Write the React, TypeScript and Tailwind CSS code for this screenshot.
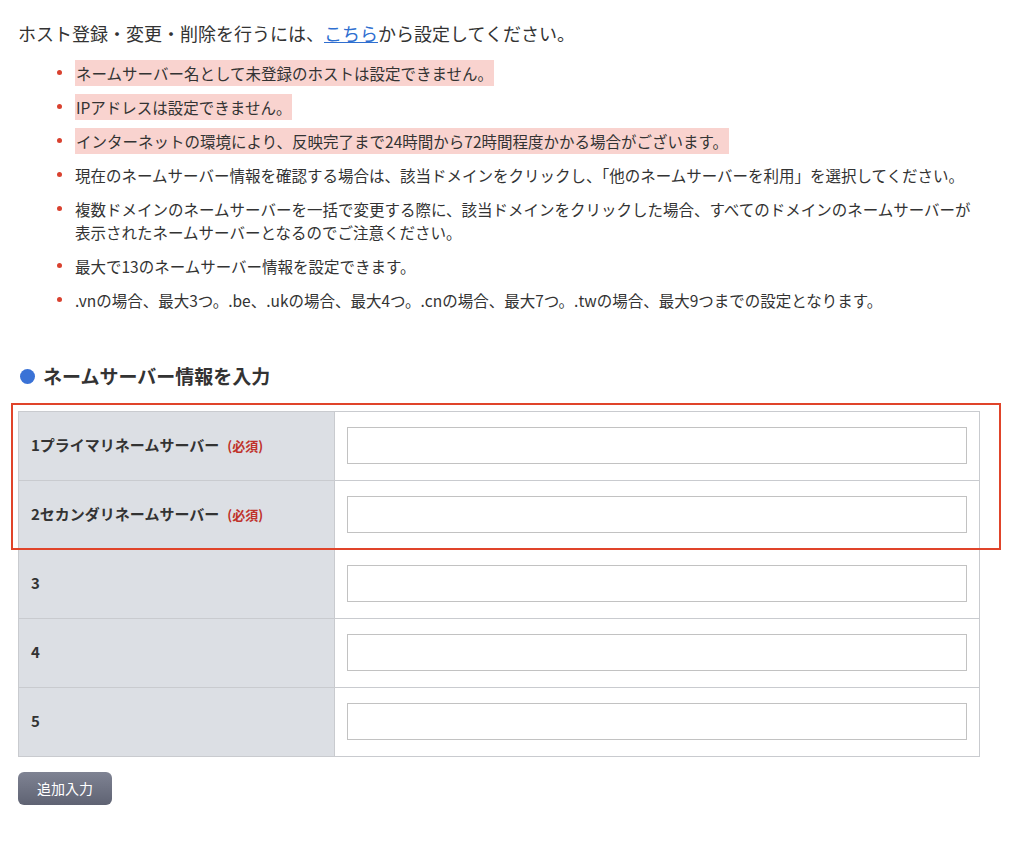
import React from "react";

const F = { fontFamily: '"Noto Sans CJK JP", "Noto Sans", sans-serif' };

const bullets: { t: string; hl?: boolean }[] = [
  { t: "ネームサーバー名として未登録のホストは設定できません。", hl: true },
  { t: "IPアドレスは設定できません。", hl: true },
  { t: "インターネットの環境により、反映完了まで24時間から72時間程度かかる場合がございます。", hl: true },
  { t: "現在のネームサーバー情報を確認する場合は、該当ドメインをクリックし、「他のネームサーバーを利用」を選択してください。" },
  { t: "複数ドメインのネームサーバーを一括で変更する際に、該当ドメインをクリックした場合、すべてのドメインのネームサーバーが表示されたネームサーバーとなるのでご注意ください。" },
  { t: "最大で13のネームサーバー情報を設定できます。" },
  { t: ".vnの場合、最大3つ。.be、.ukの場合、最大4つ。.cnの場合、最大7つ。.twの場合、最大9つまでの設定となります。" },
];

const rows = [
  { l: "1プライマリネームサーバー", r: true },
  { l: "2セカンダリネームサーバー", r: true },
  { l: "3" },
  { l: "4" },
  { l: "5" },
];

export default function App() {
  return (
    <div style={F} className="w-[1024px] h-[851px] bg-white text-[#333] pl-[18px] pt-[20px]">
      <p className="text-[18px] leading-[26px]">
        ホスト登録・変更・削除を行うには、<span className="text-[#2f6fd0] underline">こちら</span>から設定してください。
      </p>
      <ul className="mt-[16px] ml-[38px] w-[920px] flex flex-col gap-[11px] text-[15.5px] leading-[23px]">
        {bullets.map((b, i) => (
          <li key={i} className="flex">
            <span className="w-[19px] shrink-0 relative">
              <span className="absolute left-[1px] top-[8px] w-[5px] h-[5px] rounded-full bg-[#d9412f]" />
            </span>
            <span>
              <span className={b.hl ? "bg-[#f9d3cf] px-[1px] py-[2px]" : ""}>{b.t}</span>
            </span>
          </li>
        ))}
      </ul>
      <div className="mt-[50px] flex items-center gap-[8px]">
        <span className="ml-[2px] w-[15px] h-[15px] rounded-full bg-[#3a72d6]" />
        <h2 className="text-[19px] font-bold text-[#333]">ネームサーバー情報を入力</h2>
      </div>
      <div className="relative mt-[20px] w-[962px]">
        <div className="absolute left-[-7px] top-[-8px] w-[990px] h-[147px] border-2 border-[#e0442a] pointer-events-none" />
        <table className="w-full border-collapse">
          <tbody>
            {rows.map((r, i) => (
              <tr key={i} className="h-[69px]">
                <td className="w-[316px] bg-[#dcdfe4] border border-[#c9cbcf] pl-[12px] text-[15px] font-bold text-[#333]">
                  {r.l}
                  {r.r && <span className="ml-[8px] text-[13px] text-[#c0322a]">(必須)</span>}
                </td>
                <td className="border border-[#c9cbcf] px-[12px]">
                  <div className="h-[37px] border border-[#c2c2c2] bg-white" />
                </td>
              </tr>
            ))}
          </tbody>
        </table>
      </div>
      <button className="mt-[15px] w-[94px] h-[33px] rounded-[6px] bg-gradient-to-b from-[#7f8393] to-[#5f6373] text-white text-[14px]">
        追加入力
      </button>
    </div>
  );
}
